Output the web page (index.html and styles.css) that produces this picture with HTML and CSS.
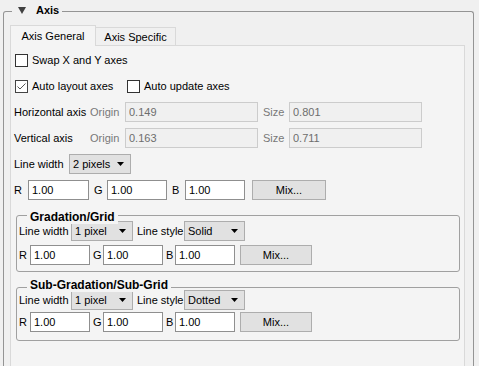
FILE: index.html
```html
<!DOCTYPE html>
<html lang="en">
<head>
    <meta charset="UTF-8">
    <title>Axis</title>
    <link rel="stylesheet" href="styles.css">
</head>
<body>
    <div class="axis-box">
        <div class="axis-title">
            <svg class="collapse" width="8" height="7" viewBox="0 0 8 7"><polygon points="0,0 8,0 4,7" fill="#404040"/></svg>
            Axis
        </div>

        <div class="tab-bar">
            <div class="tab active">Axis General</div>
            <div class="tab">Axis Specific</div>
        </div>

        <div class="tab-panel">
            <div class="row">
                <label class="check">
                    <svg width="13" height="13"><rect x="0.5" y="0.5" width="12" height="12" fill="#fff" stroke="#333"/></svg>
                    Swap X and Y axes
                </label>
            </div>

            <div class="row">
                <label class="check first">
                    <svg width="13" height="13"><rect x="0.5" y="0.5" width="12" height="12" fill="#fff" stroke="#444"/><path d="M2.5 6.5 L5 9 L10.5 3.5" fill="none" stroke="#555" stroke-width="1"/></svg>
                    Auto layout axes
                </label>
                <label class="check">
                    <svg width="13" height="13"><rect x="0.5" y="0.5" width="12" height="12" fill="#fff" stroke="#333"/></svg>
                    Auto update axes
                </label>
            </div>

            <div class="row axis-row">
                <span>Horizontal axis</span>
                <span class="dim">Origin</span>
                <input class="field" type="text" value="0.149" disabled>
                <span class="dim size">Size</span>
                <input class="field" type="text" value="0.801" disabled>
            </div>

            <div class="row axis-row">
                <span>Vertical axis</span>
                <span class="dim">Origin</span>
                <input class="field" type="text" value="0.163" disabled>
                <span class="dim size">Size</span>
                <input class="field" type="text" value="0.711" disabled>
            </div>

            <div class="row">
                <span class="lbl-width">Line width</span>
                <div class="combo main-combo"><span>2 pixels</span><svg width="7" height="4"><path d="M0 0H7L3.5 4Z" fill="#000"/></svg></div>
            </div>

            <div class="row rgb">
                <span class="c-r">R</span>
                <input class="field" type="text" value="1.00">
                <span class="c-g">G</span>
                <input class="field" type="text" value="1.00">
                <span class="c-b">B</span>
                <input class="field" type="text" value="1.00">
                <button class="btn">Mix...</button>
            </div>

            <div class="group grad">
                <div class="group-title">Gradation/Grid</div>
                <div class="row">
                    <span class="lbl-lw">Line width</span>
                    <div class="combo c1"><span>1 pixel</span><svg width="7" height="4"><path d="M0 0H7L3.5 4Z" fill="#000"/></svg></div>
                    <span class="lbl-ls">Line style</span>
                    <div class="combo c2"><span>Solid</span><svg width="7" height="4"><path d="M0 0H7L3.5 4Z" fill="#000"/></svg></div>
                </div>
                <div class="row rgb small">
                    <span class="c-r">R</span>
                    <input class="field" type="text" value="1.00">
                    <span class="c-g">G</span>
                    <input class="field" type="text" value="1.00">
                    <span class="c-b">B</span>
                    <input class="field" type="text" value="1.00">
                    <button class="btn">Mix...</button>
                </div>
            </div>

            <div class="group subgrad">
                <div class="group-title">Sub-Gradation/Sub-Grid</div>
                <div class="row">
                    <span class="lbl-lw">Line width</span>
                    <div class="combo c1"><span>1 pixel</span><svg width="7" height="4"><path d="M0 0H7L3.5 4Z" fill="#000"/></svg></div>
                    <span class="lbl-ls">Line style</span>
                    <div class="combo c2"><span>Dotted</span><svg width="7" height="4"><path d="M0 0H7L3.5 4Z" fill="#000"/></svg></div>
                </div>
                <div class="row rgb small">
                    <span class="c-r">R</span>
                    <input class="field" type="text" value="1.00">
                    <span class="c-g">G</span>
                    <input class="field" type="text" value="1.00">
                    <span class="c-b">B</span>
                    <input class="field" type="text" value="1.00">
                    <button class="btn">Mix...</button>
                </div>
            </div>
        </div>
    </div>
</body>
</html>
```

FILE: styles.css
```css
html, body { margin: 0; height: 100%; overflow: hidden; background-color: #f0f0f0; }
body { font-family: "Liberation Sans", Arial, sans-serif; font-size: 11px; color: #000; }

/* outer "Axis" group box, cut off by the window bottom */
.axis-box { position: relative; box-sizing: border-box; height: 355px; display: flex; flex-direction: column; margin: 11px 5px 0 3px; padding: 13px 8px 0 6px; border: 1px solid #949494; border-bottom: none; border-radius: 3px 3px 0 0; }
.axis-title { position: absolute; left: 8px; top: -8px; display: flex; align-items: center; padding: 0 3px 0 6px; background-color: #f0f0f0; font-weight: bold; line-height: 13px; }
.collapse { margin-right: 10px; }

/* tabs */
.tab-bar { display: flex; align-items: flex-end; height: 20px; flex: none; }
.tab { box-sizing: border-box; width: 81px; height: 18px; padding-top: 3px; margin-left: -1px; border: 1px solid #d9d9d9; border-bottom: none; background-color: #f0f0f0; text-align: center; line-height: 13px; }
.tab.active { position: relative; z-index: 1; width: 86px; height: 21px; margin: 0 0 -1px 0; padding-top: 4px; background-color: #f4f4f4; }
.tab-panel { flex: 1; display: flex; flex-direction: column; gap: 6px; padding: 4px 0 0 3px; border: 1px solid #d9d9d9; border-bottom: none; background-color: #f4f4f4; }

.row { display: flex; align-items: center; height: 20px; flex: none; }
.check { display: flex; align-items: center; margin-left: 1px; }
.check svg { margin-right: 4px; }
.check.first { width: 111px; }

.axis-row { display: grid; grid-template-columns: 76px 35px 133px 31px 133px; }
.dim { color: #787878; }
.size { padding-left: 5px; }

.field { box-sizing: border-box; height: 20px; width: 61px; margin: 0; padding: 0 3px; border: 1px solid #8f8f8f; background-color: #fff; font: inherit; color: #000; outline: none; }
.field:disabled { width: 133px; border-color: #cccccc; background-color: #f0f0f0; color: #6d6d6d; }

.combo { box-sizing: border-box; display: flex; align-items: center; justify-content: space-between; height: 20px; padding: 0 6px 0 3px; border: 1px solid #adadad; background-color: #e1e1e1; }
.lbl-width { width: 55px; }
.main-combo { width: 62px; }

.btn { box-sizing: border-box; height: 20px; width: 74px; margin: 0 0 0 7px; padding: 0; border: 1px solid #adadad; background-color: #e1e1e1; font: inherit; color: #000; }

.rgb .c-r { width: 14px; }
.rgb .c-g, .rgb .c-b { width: 13px; margin-left: 5px; }
.rgb .field { width: 60px; }
.rgb .field:first-of-type { width: 61px; }

/* inner group boxes */
.group { position: relative; flex: none; margin: 9px 4px 0 2px; padding: 5px 0 6px 2px; border: 1px solid #a0a0a0; border-radius: 3px; display: flex; flex-direction: column; gap: 4px; }
.group-title { position: absolute; left: 10px; top: -6px; padding: 0 3px; background-color: #f4f4f4; font-size: 12px; font-weight: bold; line-height: 14px; }
.subgrad { padding: 2px 0 8px 2px; gap: 2px; }
.subgrad .group-title { top: -10px; }

.lbl-lw { width: 52px; }
.lbl-ls { width: 47px; margin-left: 4px; }
.c1 { width: 62px; }
.c2 { width: 61px; }

.small .c-r { width: 11px; }
.small .c-g { width: 10px; margin-left: 3px; }
.small .c-b { width: 9px; margin-left: 3px; }
.small .field, .small .field:first-of-type { width: 60px; }
.small .btn { width: 72px; margin-left: 5px; }
```
